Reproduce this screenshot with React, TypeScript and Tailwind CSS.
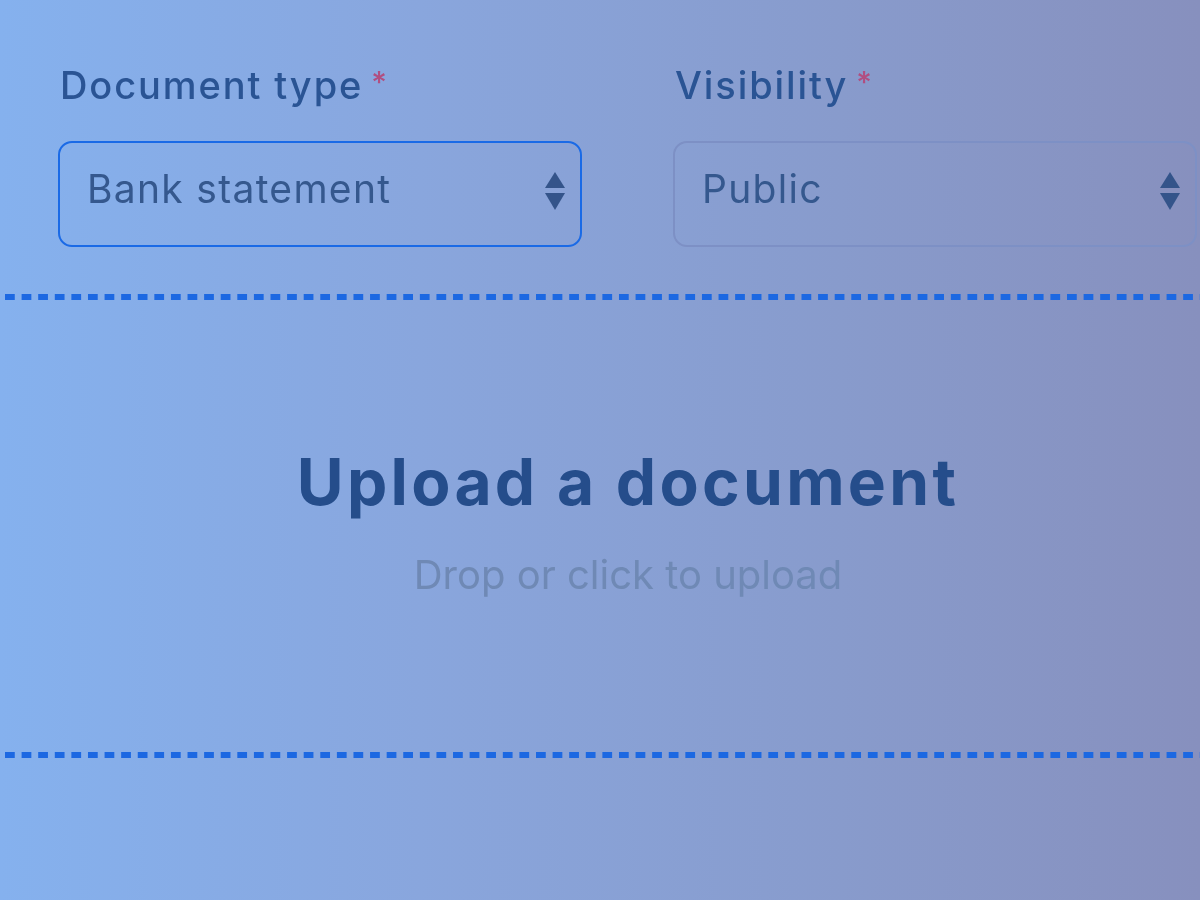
const DASHES =
  "h-[6px] w-full bg-[linear-gradient(90deg,#1c68e2_10px,transparent_10px)] bg-[length:16.6px_6px] bg-repeat-x bg-[position:5px_0]";

function Arrows() {
  return (
    <svg width="20" height="38" viewBox="0 0 20 38" className="shrink-0 -translate-y-[3px]">
      <path d="M10 0 L20 16 L0 16 Z" fill="#34548a" />
      <path d="M0 21 L20 21 L10 38 Z" fill="#34548a" />
    </svg>
  );
}

function Field({ label, value, focused }: { label: string; value: string; focused?: boolean }) {
  return (
    <div className="flex w-[524px] flex-col">
      <div className="flex items-start pl-[2px] text-[38px] font-medium leading-[44px] tracking-[1.9px] text-[#2a5494]">
        <span>{label}</span>
        <span className="ml-[8px] mt-[4px] text-[30px] leading-[30px] text-[#b14e80]">*</span>
      </div>
      <div
        className={`mt-[34px] flex h-[106px] items-center justify-between rounded-[14px] pl-[27px] pr-[15px] ${
          focused ? "border-[2.5px] border-[#1a6ae6]" : "border-[2px] border-[#7d90c5]"
        }`}
      >
        <span className="pb-[10px] text-[39px] leading-[48px] tracking-[1.3px] text-[#35588e]">{value}</span>
        <Arrows />
      </div>
    </div>
  );
}

export default function App() {
  return (
    <div className="h-[900px] w-[1200px] overflow-hidden bg-[linear-gradient(90deg,#85b1ee_0%,#89a6dd_35%,#889bcc_70%,#8790be_100%)] font-['Inter',sans-serif] blur-[0.4px]">
      <div className="flex gap-[91px] pl-[58px] pt-[63px]">
        <Field label="Document type" value="Bank statement" focused />
        <Field label="Visibility" value="Public" />
      </div>
      <div className={`mt-[47px] ${DASHES}`} />
      <div className="flex h-[452px] flex-col items-center pl-[56px] pt-[146px]">
        <div className="text-[64px] font-bold leading-[72px] tracking-[3.3px] text-[#254d8b]">Upload a document</div>
        <div className="mt-[32px] text-[40px] leading-[50px] text-[#6f89b5]">Drop or click to upload</div>
      </div>
      <div className={DASHES} />
    </div>
  );
}
